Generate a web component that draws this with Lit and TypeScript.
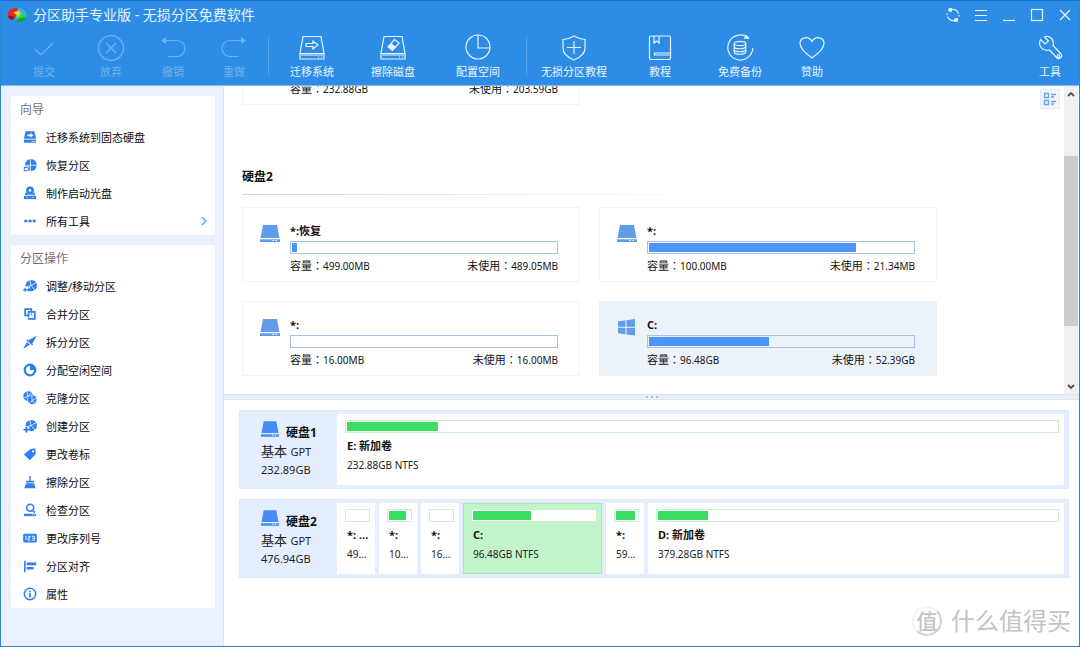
import { LitElement, html, svg, css, nothing, SVGTemplateResult } from "lit";
import { customElement, property } from "lit/decorators.js";
import { classMap } from "lit/directives/class-map.js";
import { styleMap } from "lit/directives/style-map.js";

type Icon = SVGTemplateResult;

/* Toolbar glyphs: line art on a 28x28 grid. */
const toolIcons: Record<string, Icon> = {
  commit: svg`<path d="M5 15l6 6L23 9"/>`,
  discard: svg`<circle cx="14" cy="14" r="12.4"/><path d="M9 9l10 10M19 9L9 19"/>`,
  undo: svg`<path d="M5 6.500h13a8 8 0 0 1 0 16H9"/><path class="solid" d="M7 3v7L2 6.500z"/>`,
  redo: svg`<path d="M23 6.500h-13a8 8 0 0 0 0 16h9"/><path class="solid" d="M21 3v7l5-3.500z"/>`,
  migrate: svg`<path d="M5 2.500h18l3 17H2z"/><path d="M2 19.500v5.500h24v-5.500M3 21h22"/><path d="M20 23h1M23 23h1"/><path d="M8 9.500h7V7l5 4-5 4v-2.500H8z"/>`,
  wipe: svg`<path d="M5 2.500h18l3 17H2z"/><path d="M2 19.500v5.500h24v-5.500M3 21h22"/><path d="M20 23h1M23 23h1"/><path d="M9 13l6.500-7.500 4.500 3.500-6.500 7.500z"/><path class="solid" d="M9.500 13l3-3.500 4 3.200-3 3.500z"/>`,
  allocate: svg`<circle cx="14" cy="13" r="12"/><path d="M14 1v13h12"/>`,
  shield: svg`<path d="M14 2c4 2.500 7 3 11 3.500V14c0 6-5 9.500-11 12C8 23.500 3 20 3 14V5.500c4-.5 7-1 11-3.500z"/><path d="M14 7v13M7 13.500h14"/>`,
  book: svg`<rect x="3.500" y="2" width="21" height="23.500" rx="1.500"/><path d="M8 2v7l2.500-2L13 9V2M24.500 19H8.500v2h15"/>`,
  backup: svg`<path d="M23 4.500A12.500 12.500 0 1 0 26.800 14"/><path class="solid" d="M17.500 4.500L20.500.500l2.500 4.500z"/><ellipse cx="14" cy="9.500" rx="5.800" ry="2.200"/><path d="M8.200 9.500v8.500c0 3 11.600 3 11.600 0V9.500M8.200 12.500c0 3 11.600 3 11.600 0M8.200 15.500c0 3 11.600 3 11.600 0"/>`,
  heart: svg`<path d="M14 24C7 19 2 14.500 2 9.500 2 3 10.500 1.500 14 7.500c3.500-6 12-4.500 12 2 0 5-5 9.500-12 14.500z"/>`,
  wrench: svg`<path d="M4.500 5.500L9 10l3.500-3L8.500 3C13 1 18.500 5 17 11.500l8 8.500c2 2.500-1.500 6-4 4l-7.500-8C7 18 1.500 12 4.500 5.500z"/><circle cx="22.500" cy="22" r="1.300"/>`,
};

const pie = svg`<circle cx="9.500" cy="7.500" r="6.500"/><path class="seam" d="M7.500.500L9.300 7.500 15 4M9.300 7.500L14 13M9.300 7.500L2 9.500"/>`;

/* Sidebar glyphs: solid shapes on a 16x16 grid; .cut paints the card colour. */
const sideIcons: Record<string, Icon> = {
  migrate: svg`<path d="M3 1.500h10l2 8.500H1z"/><path d="M1 11h14v3.500H1z"/><path class="cut" d="M5 5h3.500V3.200L12 6 8.500 8.800V7H5zM10 12.300h1.500v1H10zM12.500 12.300H14v1h-1.500z"/>`,
  restore: svg`<circle cx="9" cy="8" r="6.800"/><path class="seam" d="M8.500 0v16M1 8.300h15"/><path class="halo" d="M0 9.500h7V16H0z"/><path class="line" d="M1.500 10v4.500h3a1.800 1.800 0 0 0 0-3.600H2"/>`,
  disc: svg`<path fill-rule="evenodd" d="M8 .500a4.500 4.500 0 0 1 0 9 4.500 4.500 0 0 1 0-9zm0 3a1.500 1.500 0 0 0 0 3 1.500 1.500 0 0 0 0-3z"/><path d="M3.500 7l2 2.800h5l2-2.800 2 3.500h-13z"/><path d="M1 11.500h14V15H1z"/><path class="cut" d="M4 12.800h1.500v1H4zM10.500 12.800H12v1h-1.500z"/>`,
  more: svg`<path d="M1.500 6.500h3.500v3H1.500zM6.300 6.500h3.500v3H6.300zM11 6.500h3.500v3H11z"/>`,
  resize: svg`${pie}<path class="halo" d="M0 9h8v7H0z"/><path d="M0 12.200l3-2.700v2h3v-2l3 2.700-3 2.800v-2H3v2z"/>`,
  merge: svg`<path fill-rule="evenodd" d="M1.500 1.500h9v3h4v10h-9v-4h-4zM3.500 3.500v5h2v-4h3v-1zM7.500 6.500v4h-1v2h6v-6h-2v4z"/><path class="cut" d="M7.500 6.500h2v2h-2z"/>`,
  split: svg`<path d="M15.800.800L10.500 10 6 6z"/><path d="M5 4.800l6.500 5.700-1 1.500L4 6.300z"/><path d="M4.500 8l3.500 3-7.800 4.800z"/>`,
  allocate: svg`<path fill-rule="evenodd" d="M8 .700a7.300 7.300 0 0 1 0 14.600A7.300 7.300 0 0 1 8 .700zm0 2.500a4.800 4.800 0 1 0 4.800 4.800H8z"/>`,
  clone: svg`<circle cx="6" cy="6" r="5.600"/><circle class="ring" cx="10.500" cy="10" r="5.500"/><path class="seam" d="M4.500.500L5.500 6 1 8M5.500 6L9 2M10 5L10.500 11 15.500 8M10.500 11L7 14M10.500 11l3.500 4"/>`,
  create: svg`${pie}<path class="halo" d="M0 9h7.300v7H0z"/><path d="M2.800 9h2.200v2.200h2.200v2H5v2.300H2.800v-2.300H.500v-2h2.300z"/>`,
  label: svg`<path fill-rule="evenodd" d="M8 2.500l6-1 .5 6.500-6.500 7L1 8.500zM11.500 3.700a1.300 1.300 0 1 0 0 2.600 1.300 1.300 0 0 0 0-2.600z"/>`,
  erase: svg`<path d="M7.200 1h1.600v5.500h3.700v2h-9v-2h3.700z"/><path d="M3.500 9.300h9l2 5.700h-13z"/>`,
  check: svg`<path class="line thick" d="M11 8.500l2.500 2.500"/><circle class="line thick" cx="8.300" cy="5.300" r="4"/><path d="M1 12.300h14V15H1z"/><path class="cut" d="M10 13.200h1.200v.8H10zM12.300 13.200h1.200v.8h-1.200z"/>`,
  serial: svg`<rect x=".2" y="3" width="15.600" height="10" rx="1.500"/><path class="cutline" d="M2.500 6h1v4.500M5.500 6h2.500v2H6v2.500h2.500M10 6h3v4.500h-3M10.500 8.200H13"/>`,
  align: svg`<path d="M1.200 2H3v13H1.200zM4.200 4H15.200v3H4.200zM4.200 9h8v3h-8z"/>`,
  info: svg`<circle class="line thick" cx="8" cy="8" r="6.500"/><path d="M7 7.200h2V12H7zM7 4.200h2V6H7z"/>`,
};

const diskShape = svg`<path d="M3 0h14l2.500 13H.500z"/><path fill-rule="evenodd" d="M0 14.200h20V17H0zM12.500 15v1h1.500v-1zM15.500 15v1H17v-1z"/>`;
const windowsShape = svg`<path d="M1 2.500l7.500-1.200v6.500H1zM9.500 1.200L18 0v7.800H9.500zM1 8.800h7.500v6.500L1 14.200zM9.500 8.800H18v7.800l-8.500-1.200z"/>`;

interface Part {
  name: string;
  size: string;
  used: number;
  kind: "tiny" | "medium" | "wide";
  selected?: boolean;
}

const tools: Array<[string, string, boolean] | null> = [
  ["commit", "提交", true],
  ["discard", "放弃", true],
  ["undo", "撤销", true],
  ["redo", "重做", true],
  null,
  ["migrate", "迁移系统", false],
  ["wipe", "擦除磁盘", false],
  ["allocate", "配置空间", false],
  null,
  ["shield", "无损分区教程", false],
  ["book", "教程", false],
  ["backup", "免费备份", false],
  ["heart", "赞助", false],
];

const wizard = [
  ["migrate", "迁移系统到固态硬盘"],
  ["restore", "恢复分区"],
  ["disc", "制作启动光盘"],
  ["more", "所有工具"],
];

const operations = [
  ["resize", "调整/移动分区"],
  ["merge", "合并分区"],
  ["split", "拆分分区"],
  ["allocate", "分配空闲空间"],
  ["clone", "克隆分区"],
  ["create", "创建分区"],
  ["label", "更改卷标"],
  ["erase", "擦除分区"],
  ["check", "检查分区"],
  ["serial", "更改序列号"],
  ["align", "分区对齐"],
  ["info", "属性"],
];

const volumes = [
  { name: "*:恢复", total: "499.00MB", free: "489.05MB", used: 2 },
  { name: "*:", total: "100.00MB", free: "21.34MB", used: 78.5 },
  { name: "*:", total: "16.00MB", free: "16.00MB", used: 0 },
  { name: "C:", total: "96.48GB", free: "52.39GB", used: 45.6, system: true },
];

const disks: Array<{ name: string; size: string; parts: Part[] }> = [
  {
    name: "硬盘1",
    size: "232.89GB",
    parts: [{ name: "E: 新加卷", size: "232.88GB NTFS", used: 12.8, kind: "wide" }],
  },
  {
    name: "硬盘2",
    size: "476.94GB",
    parts: [
      { name: "*: 恢复", size: "499.00MB NTFS", used: 0, kind: "tiny" },
      { name: "*:", size: "100.00MB FAT32", used: 81, kind: "tiny" },
      { name: "*:", size: "16.00MB", used: 0, kind: "tiny" },
      { name: "C:", size: "96.48GB NTFS", used: 47.5, kind: "medium", selected: true },
      { name: "*:", size: "593.00MB NTFS", used: 90, kind: "tiny" },
      { name: "D: 新加卷", size: "379.28GB NTFS", used: 12.6, kind: "wide" },
    ],
  },
];

const base = css`
  * {
    box-sizing: border-box;
  }
  button {
    font: inherit;
    color: inherit;
    background: none;
    border: 0;
    margin: 0;
    padding: 0;
    text-align: left;
  }
  svg {
    display: block;
    flex: none;
  }
`;

@customElement("app-header")
class AppHeader extends LitElement {
  static styles = [
    base,
    css`
      :host {
        display: block;
        background: #2d8de6;
        color: #e9f4ff;
        border-top: 1px solid #1a75c5;
        border-bottom: 1px solid #7fbaf2;
      }
      .titlebar {
        display: flex;
        align-items: center;
        height: 28px;
        padding-left: 6px;
        gap: 6px;
      }
      .title {
        flex: 1;
        margin: 0;
        font-size: 14px;
        font-weight: 400;
        line-height: 20px;
      }
      .caption {
        display: flex;
      }
      .caption button {
        width: 28px;
        height: 28px;
        display: grid;
        place-items: center;
      }
      .stroke {
        fill: none;
        stroke: currentColor;
        stroke-width: 1.2;
      }
      .solid {
        fill: currentColor;
        stroke: none;
      }
      .toolbar {
        display: grid;
        grid-template-columns: 68px 66px 58px 64px 4px 84px 78px 92px 4px 92px 80px 80px 64px 1fr;
        height: 56px;
        padding-left: 9px;
      }
      .tool {
        display: flex;
        flex-direction: column;
        align-items: center;
        padding-top: 5px;
        gap: 2px;
        font-size: 11px;
        line-height: 16px;
        white-space: nowrap;
      }
      .tool:disabled {
        color: #70b3ef;
      }
      .last {
        justify-self: end;
        width: 58px;
      }
      .rule {
        justify-self: center;
        width: 1px;
        height: 38px;
        margin-top: 8px;
        background: #5aa6ec;
      }
    `,
  ];

  tool(icon: string, label: string, disabled: boolean, last = false) {
    return html`<button class=${classMap({ tool: true, last })} ?disabled=${disabled}>
      <svg class="stroke" width="28" height="28" viewBox="0 0 28 28">${toolIcons[icon]}</svg>
      <span>${label}</span>
    </button>`;
  }

  render() {
    return html`
      <div class="titlebar">
        <svg width="20" height="18" viewBox="0 0 20 18">
          <path fill="#35b6f5" d="M10 2c5 0 9 2.500 9.500 7-3 1-5 0-7-1z" />
          <path fill="#3ecb4a" d="M19.500 9c0 5-4 7-9.500 6.500L9 9.500l3.500-2z" />
          <path fill="#14a53a" d="M10 16.500c5 0 8.500-2 9.300-5.500l-9.300 2z" />
          <path fill="#e8281f" d="M11 2.500C5 1 1 4 1 9l.5 2.500L6 13.500l3.500-4.500z" />
          <path fill="#a80f12" d="M1 9.500c0 2.500 2 4 4.500 4.500l2.500-3.500z" />
          <path fill="#f4cf3c" d="M6.500 6.500l5-2 3 3-4 2.500z" />
          <path fill="#8be05a" d="M9.500 9.500l4-3 1 1.500-4.500 4z" />
        </svg>
        <h1 class="title">分区助手专业版 - 无损分区免费软件</h1>
        <div class="caption">
          <button aria-label="刷新">
            <svg class="stroke" width="16" height="16" viewBox="0 0 16 16">
              <path d="M5 3a6 6 0 0 1 8.500 3.500M14 8v1.500M11 13a6 6 0 0 1-8.500-3.500M2 8V6.500" />
              <path class="solid" d="M3 1.500L7 1v3.500L4 5zM9 11.500l4-.5v3.500l-4 .5z" />
            </svg>
          </button>
          <button aria-label="菜单">
            <svg class="stroke" width="14" height="14" viewBox="0 0 14 14">
              <path d="M1 2.500h12M1 7.500h12M1 12.500h12" />
            </svg>
          </button>
          <button aria-label="最小化">
            <svg class="stroke" width="14" height="14" viewBox="0 0 14 14"><path d="M1 12.500h12" /></svg>
          </button>
          <button aria-label="最大化">
            <svg class="stroke" width="14" height="14" viewBox="0 0 14 14">
              <rect x="1.500" y="1.500" width="11" height="11" />
            </svg>
          </button>
          <button aria-label="关闭">
            <svg class="stroke" width="14" height="14" viewBox="0 0 14 14">
              <path d="M2 2l10 10M12 2L2 12" />
            </svg>
          </button>
        </div>
      </div>
      <div class="toolbar">
        ${tools.map((t) => (t ? this.tool(t[0], t[1], t[2]) : html`<span class="rule"></span>`))}
        ${this.tool("wrench", "工具", false, true)}
      </div>
    `;
  }
}

@customElement("side-panel")
class SidePanel extends LitElement {
  @property() heading = "";
  @property({ attribute: false }) items: string[][] = [];

  static styles = [
    base,
    css`
      :host {
        display: block;
        background: #fff;
        color: #0c0c0c;
        font-size: 11px;
      }
      h2 {
        margin: 0;
        padding: 1px 0 0 9px;
        font-size: 12px;
        font-weight: 400;
        line-height: 26px;
        color: #6d7279;
      }
      ul {
        margin: 0;
        padding: 0;
        list-style: none;
      }
      .item {
        display: flex;
        align-items: center;
        gap: 9px;
        width: 100%;
        height: 28px;
        padding: 0 6px 0 12px;
      }
      .item span {
        flex: 1;
        white-space: nowrap;
      }
      .icon {
        fill: #2d7ff0;
      }
      .cut,
      .halo {
        fill: #fff;
      }
      .seam {
        fill: none;
        stroke: #fff;
        stroke-width: 0.9;
      }
      .ring {
        stroke: #fff;
        stroke-width: 0.8;
      }
      .line {
        fill: none;
        stroke: #2d7ff0;
        stroke-width: 1.2;
      }
      .thick {
        stroke-width: 1.7;
      }
      .cutline {
        fill: none;
        stroke: #fff;
      }
      .arrow {
        fill: none;
        stroke: #4da3f7;
        stroke-width: 1.3;
      }
    `,
  ];

  render() {
    return html`
      <h2>${this.heading}</h2>
      <ul>
        ${this.items.map(
          ([icon, label]) => html`<li>
            <button class="item">
              <svg class="icon" width="14" height="14" viewBox="0 0 16 16">${sideIcons[icon]}</svg>
              <span>${label}</span>
              ${icon === "more"
                ? html`<svg class="arrow" width="10" height="12" viewBox="0 0 10 12">
                    <path d="M3 2l4 4-4 4" />
                  </svg>`
                : nothing}
            </button>
          </li>`
        )}
      </ul>
    `;
  }
}

@customElement("volume-card")
class VolumeCard extends LitElement {
  @property() name = "";
  @property() total = "";
  @property() free = "";
  @property({ type: Number }) used = 0;
  @property({ type: Boolean, reflect: true }) system = false;

  static styles = [
    base,
    css`
      :host {
        display: flex;
        gap: 10px;
        padding: 15px 21px 7px 17px;
        border: 1px solid #f1f3f5;
        background: #fff;
      }
      :host([system]) {
        background: #ecf2fa;
        border-color: #ecf2fa;
      }
      .icon {
        fill: #619bea;
        margin-top: 2px;
      }
      .body {
        flex: 1;
        min-width: 0;
      }
      .name {
        font-size: 11px;
        line-height: 16px;
        font-weight: 700;
        color: #111;
      }
      .bar {
        height: 13px;
        margin: 2px 0 4px;
        padding: 1px;
        border: 1px solid #a9c1e6;
      }
      .fill {
        height: 100%;
        background: #4a96fe;
      }
      .facts {
        display: flex;
        justify-content: space-between;
        font-family: "Noto Sans", "Noto Sans CJK TC", sans-serif;
        font-size: 11px;
        line-height: 16px;
        color: #151515;
      }
      .num {
        font-size: 10px;
      }
    `,
  ];

  render() {
    return html`
      <svg class="icon" width="20" height="17" viewBox="0 0 20 17">
        ${this.system ? windowsShape : diskShape}
      </svg>
      <div class="body">
        <div class="name">${this.name}</div>
        <div class="bar"><div class="fill" style=${styleMap({ width: `${this.used}%` })}></div></div>
        <div class="facts">
          <span>容量：<span class="num">${this.total}</span></span>
          <span>未使用：<span class="num">${this.free}</span></span>
        </div>
      </div>
    `;
  }
}

@customElement("disk-row")
class DiskRow extends LitElement {
  @property() name = "";
  @property() size = "";
  @property({ attribute: false }) parts: Part[] = [];

  static styles = [
    base,
    css`
      :host {
        display: flex;
        gap: 4px;
        padding: 3px 4px;
        border: 1px solid #dce7f8;
        background: #e4eefe;
      }
      .disk {
        flex: none;
        width: 89px;
        padding: 5px 0 0 17px;
        color: #222;
        font-size: 11px;
        line-height: 18px;
        white-space: nowrap;
      }
      .head {
        display: flex;
        align-items: flex-start;
        gap: 7px;
        height: 23px;
        font-size: 12px;
        font-weight: 700;
        line-height: 28px;
        color: #111;
      }
      .head svg {
        fill: #458cf3;
        margin-top: 2px;
      }
      .style {
        font-size: 13px;
      }
      .style span {
        font-size: 11px;
      }
      .part {
        display: flex;
        flex-direction: column;
        justify-content: flex-start;
        height: 71px;
        padding: 6px 5px 0 8px;
        background: #fff;
        overflow: hidden;
      }
      .tiny {
        flex: none;
        width: 38px;
      }
      .medium {
        flex: none;
        width: 139px;
      }
      .wide {
        flex: 1;
        min-width: 0;
      }
      .selected {
        background: #c1f5c9;
        box-shadow: inset 0 0 0 1px #a9e3b3;
      }
      .bar {
        flex: none;
        height: 13px;
        margin-bottom: 5px;
        padding: 1px;
        border: 1px solid #cdefd3;
        background: #fff;
      }
      .fill {
        display: block;
        height: 100%;
        background: #3bdc63;
      }
      .name,
      .size {
        margin: 0 1px 0 2px;
        line-height: 16px;
        overflow: hidden;
        text-overflow: ellipsis;
        white-space: nowrap;
      }
      .name {
        margin-bottom: 3px;
        font-size: 11px;
        font-weight: 700;
        color: #111;
      }
      .size {
        font-size: 10px;
        color: #222;
      }
    `,
  ];

  render() {
    return html`
      <div class="disk">
        <div class="head">
          <svg width="18" height="16" viewBox="0 0 20 17">${diskShape}</svg>
          <span>${this.name}</span>
        </div>
        <div class="style">基本 <span>GPT</span></div>
        <div>${this.size}</div>
      </div>
      ${this.parts.map(
        (p) => html`<button class=${classMap({ part: true, [p.kind]: true, selected: !!p.selected })}>
          <span class="bar"
            ><span class="fill" style=${styleMap({ width: `${p.used}%` })}></span
          ></span>
          <span class="name">${p.name}</span>
          <span class="size">${p.size}</span>
        </button>`
      )}
    `;
  }
}

@customElement("app-root")
class AppRoot extends LitElement {
  static styles = [
    base,
    css`
      :host {
        display: grid;
        grid-template-rows: auto 1fr;
        box-sizing: border-box;
        position: relative;
        height: 100vh;
        border: 1px solid #2b87d3;
        border-top: 0;
        background: #fff;
        font-family: "Noto Sans", "Noto Sans CJK SC", sans-serif;
        font-size: 11px;
      }
      .body {
        display: grid;
        grid-template-columns: 223px minmax(0, 1fr);
        min-height: 0;
      }
      .side {
        display: flex;
        flex-direction: column;
        gap: 10px;
        padding: 10px 8px 10px 10px;
        background: #eaf1fe;
        border-right: 1px solid #dbe4f2;
        overflow: hidden;
      }
      .main {
        display: grid;
        grid-template-rows: 55fr auto 44fr;
        min-width: 0;
        min-height: 0;
      }
      .volumes {
        display: flex;
        position: relative;
        min-height: 0;
        overflow: hidden;
      }
      .list {
        flex: 1;
        min-width: 0;
        display: flex;
        flex-direction: column;
        justify-content: flex-end;
        padding: 0 18px 18px;
      }
      .cards {
        display: grid;
        grid-template-columns: repeat(auto-fill, 338px);
        gap: 19px;
      }
      .group {
        margin: 63px 0 12px;
        padding-bottom: 8px;
        font-size: 12px;
        line-height: 18px;
        color: #111;
        border-bottom: 1px solid;
        border-image: linear-gradient(90deg, #c9daee, #fff 60%) 1;
      }
      .view {
        position: absolute;
        top: 3px;
        right: 19px;
        width: 20px;
        height: 20px;
        display: grid;
        place-items: center;
        background: #f0f5fd;
        border: 1px solid #e1eaf7;
      }
      .view svg {
        fill: none;
        stroke: #6c9fe8;
        stroke-width: 1.3;
      }
      .scroll {
        flex: none;
        display: flex;
        flex-direction: column;
        width: 14px;
        margin-right: 1px;
        background: #f0f0f0;
      }
      .scroll svg {
        width: 14px;
        height: 15px;
        fill: none;
        stroke: #505050;
        stroke-width: 1.8;
      }
      .before {
        flex: 55;
      }
      .thumb {
        flex: 172;
        background: #cdcdcd;
      }
      .after {
        flex: 53;
      }
      .splitter {
        display: flex;
        align-items: center;
        justify-content: center;
        gap: 3px;
        height: 6px;
        background: #e9eff6;
        border: solid #dde5ef;
        border-width: 1px 0;
      }
      .splitter i {
        width: 2px;
        height: 2px;
        background: #b4bfcd;
      }
      .disks {
        display: flex;
        flex-direction: column;
        gap: 10px;
        padding: 10px 10px 0 15px;
        min-height: 0;
      }
      .mark {
        position: absolute;
        right: 8px;
        bottom: 8px;
        display: flex;
        align-items: center;
        gap: 9px;
        color: #c4c4c4;
        font-size: 24px;
        font-weight: 400;
        line-height: 34px;
      }
      .seal {
        display: grid;
        place-items: center;
        width: 30px;
        height: 30px;
        border: 2px solid #d4d4d4;
        border-color: #f4f4f4 #cfcfcf #cfcfcf #f4f4f4;
        border-radius: 50%;
        font-size: 21px;
        font-weight: 500;
        line-height: 26px;
      }
    `,
  ];

  render() {
    return html`
      <app-header></app-header>
      <div class="body">
        <nav class="side">
          <side-panel heading="向导" .items=${wizard}></side-panel>
          <side-panel heading="分区操作" .items=${operations}></side-panel>
        </nav>
        <main class="main">
          <section class="volumes">
            <div class="list">
              <div class="cards">
                <volume-card name="E: 新加卷" total="232.88GB" free="203.59GB" used="12.8"></volume-card>
              </div>
              <h2 class="group">硬盘2</h2>
              <div class="cards">
                ${volumes.map(
                  (v) => html`<volume-card
                    name=${v.name}
                    total=${v.total}
                    free=${v.free}
                    used=${v.used}
                    ?system=${v.system}
                  ></volume-card>`
                )}
              </div>
            </div>
            <button class="view" aria-label="视图">
              <svg width="14" height="14" viewBox="0 0 14 14">
                <path d="M1.500 1.500h4v4h-4zM1.500 8.500h4v4h-4zM8 2.500h5M8 5h3M8 9.500h5M8 12h3" />
              </svg>
            </button>
            <div class="scroll">
              <svg viewBox="0 0 14 15"><path d="M4 10l3-3 3 3" /></svg>
              <div class="before"></div>
              <div class="thumb"></div>
              <div class="after"></div>
              <svg viewBox="0 0 14 15"><path d="M4 6l3 3 3-3" /></svg>
            </div>
          </section>
          <div class="splitter"><i></i><i></i><i></i></div>
          <section class="disks">
            ${disks.map(
              (d) => html`<disk-row name=${d.name} size=${d.size} .parts=${d.parts}></disk-row>`
            )}
          </section>
        </main>
      </div>
      <div class="mark"><span class="seal">值</span><span>什么值得买</span></div>
    `;
  }
}
